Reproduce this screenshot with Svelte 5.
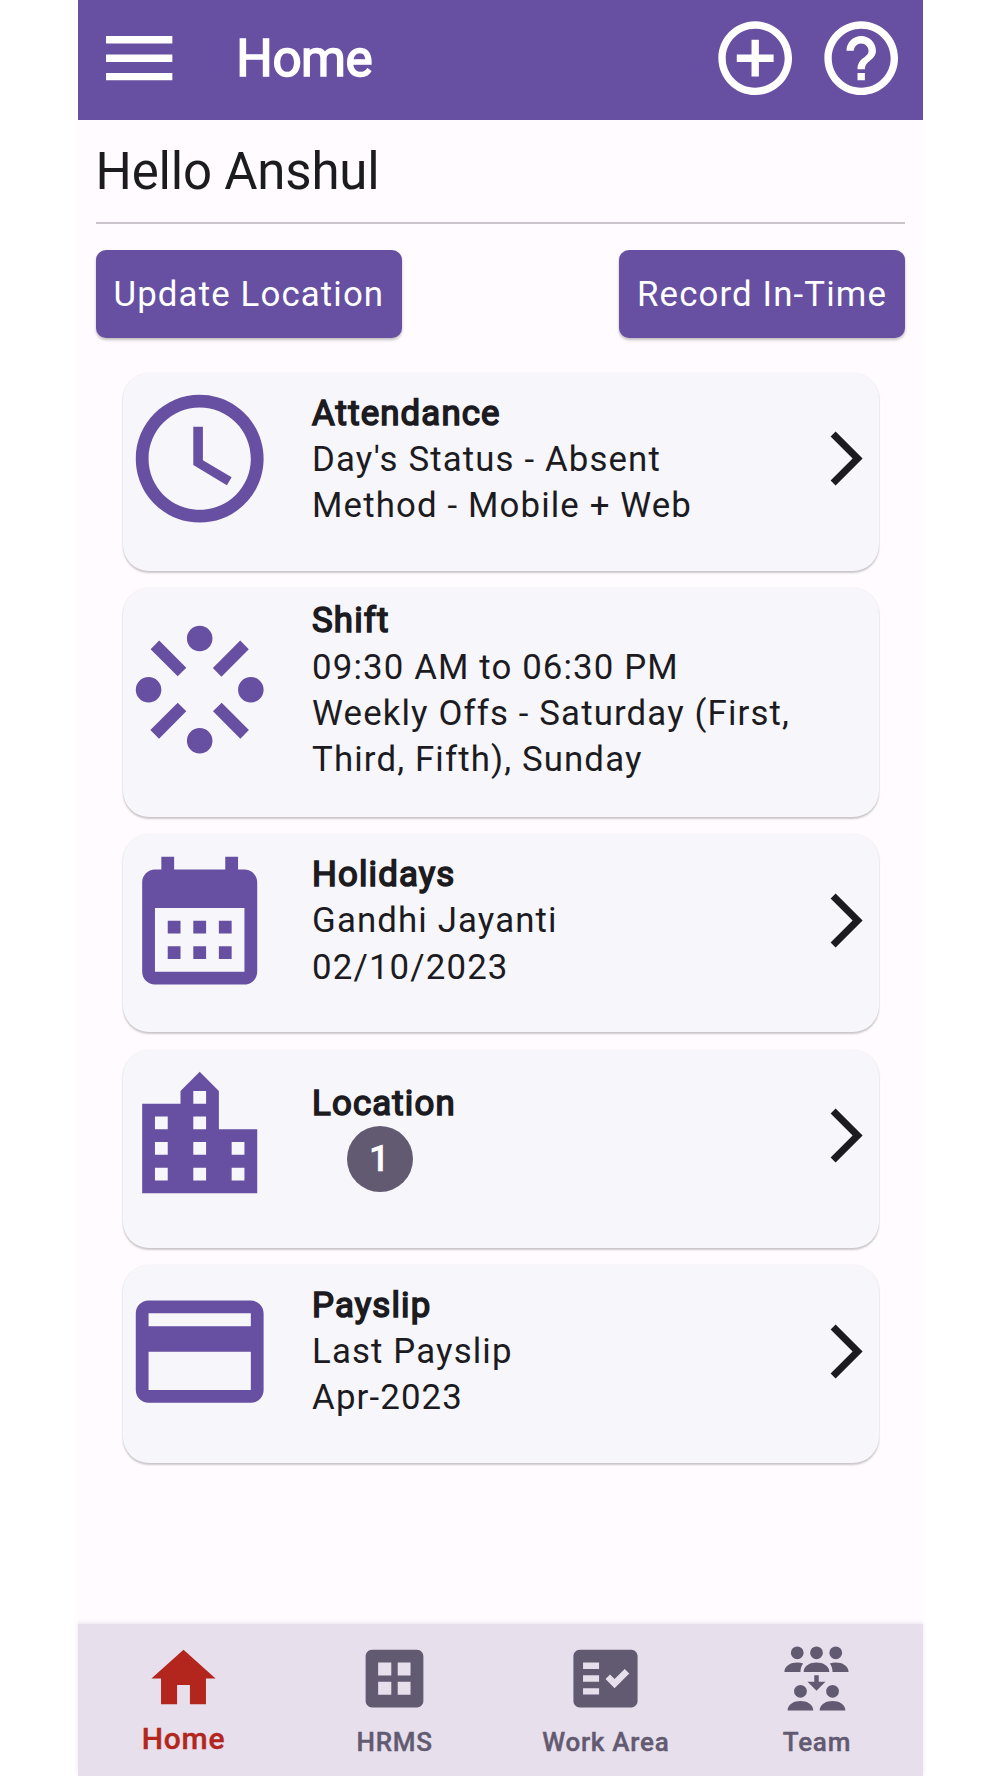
<script>
  /**
   * Employee home screen: greeting, quick actions, summary cards, bottom tabs
   */

  let userName = 'Anshul';
  let activeTab = $state('Home');

  const cards = [
    {
      title: 'Attendance',
      icon: 'clock',
      lines: ["Day's Status - Absent", 'Method - Mobile + Web'],
      link: true,
    },
    {
      title: 'Shift',
      icon: 'shift',
      lines: ['09:30 AM to 06:30 PM', 'Weekly Offs - Saturday (First, Third, Fifth), Sunday'],
      link: false,
    },
    {
      title: 'Holidays',
      icon: 'calendar',
      lines: ['Gandhi Jayanti', '02/10/2023'],
      link: true,
    },
    { title: 'Location', icon: 'city', lines: [], badge: 1, link: true },
    { title: 'Payslip', icon: 'card', lines: ['Last Payslip', 'Apr-2023'], link: true },
  ];

  const tabs = [
    { label: 'Home', icon: 'home' },
    { label: 'HRMS', icon: 'grid' },
    { label: 'Work Area', icon: 'checklist' },
    { label: 'Team', icon: 'team' },
  ];

  // 24x24 icon paths
  const icons = {
    menu: 'M3 18h18v-2H3v2zm0-5h18v-2H3v2zm0-7v2h18V6H3z',
    add: 'M13 7h-2v4H7v2h4v4h2v-4h4v-2h-4V7zm-1-5C6.48 2 2 6.48 2 12s4.48 10 10 10 10-4.48 10-10S17.52 2 12 2zm0 18c-4.41 0-8-3.59-8-8s3.59-8 8-8 8 3.59 8 8-3.59 8-8 8z',
    help: 'M11 18h2v-2h-2v2zm1-16C6.48 2 2 6.48 2 12s4.48 10 10 10 10-4.48 10-10S17.52 2 12 2zm0 18c-4.41 0-8-3.59-8-8s3.59-8 8-8 8 3.59 8 8-3.59 8-8 8zm0-14c-2.21 0-4 1.79-4 4h2c0-1.1.9-2 2-2s2 .9 2 2c0 2-3 1.75-3 5h2c0-2.25 3-2.5 3-5 0-2.21-1.79-4-4-4z',
    clock:
      'M12 2C6.48 2 2 6.48 2 12s4.48 10 10 10 10-4.48 10-10S17.52 2 12 2zm0 18c-4.42 0-8-3.58-8-8s3.58-8 8-8 8 3.58 8 8-3.58 8-8 8zM12.5 7H11v6l5.25 3.15.75-1.23-4.5-2.67V7z',
    shift:
      'M12 2a2 2 0 1 1 0 4 2 2 0 0 1 0-4zM12 18a2 2 0 1 1 0 4 2 2 0 0 1 0-4zM4 10a2 2 0 1 1 0 4 2 2 0 0 1 0-4zM20 10a2 2 0 1 1 0 4 2 2 0 0 1 0-4zM5.66 4.3L9.9 8.56 8.56 9.9 4.32 5.66zM18.34 4.3L14.06 8.6 15.4 9.98 19.68 5.66zM8.56 14.04L9.9 15.38 5.64 19.68 4.28 18.32zM15.44 14.04L14.08 15.38 18.36 19.68 19.7 18.32z',
    calendar:
      'M6 2h2v2h8V2h2v2h1c1.1 0 2 .9 2 2v14c0 1.1-.9 2-2 2H5c-1.1 0-2-.9-2-2V6c0-1.1.9-2 2-2h1V2zM5 10v10h14V10H5zM7 12h2v2H7v-2zM11 12h2v2h-2v-2zM15 12h2v2h-2v-2zM7 16h2v2H7v-2zM11 16h2v2h-2v-2zM15 16h2v2h-2v-2z',
    city: 'M15 11V5l-3-3-3 3v2H3v14h18V11h-6zm-8 8H5v-2h2v2zm0-4H5v-2h2v2zm0-4H5V9h2v2zm6 8h-2v-2h2v2zm0-4h-2v-2h2v2zm0-4h-2V9h2v2zm0-4h-2V5h2v2zm6 12h-2v-2h2v2zm0-4h-2v-2h2v2z',
    card: 'M20 4H4c-1.11 0-2 .89-2 2v12c0 1.11.89 2 2 2h16c1.11 0 2-.89 2-2V6c0-1.11-.89-2-2-2zM4 6h16v2H4V6zM4 12h16v6H4v-6z',
    chevron: 'M6.15 20.15L8 22l10-10L8 2 6.15 3.85 14.3 12z',
    home: 'M10 20v-6h4v6h5v-8h3L12 3 2 12h3v8z',
    grid: 'M19 3H5c-1.1 0-2 .9-2 2v14c0 1.1.9 2 2 2h14c1.1 0 2-.9 2-2V5c0-1.1-.9-2-2-2zM6.9 7H11v4.1H6.9V7zM13 7h4v4.1h-4V7zM6.9 13H11v4.1H6.9V13zM13 13h4v4.1h-4V13z',
    checklist:
      'M20 3H4c-1.1 0-2 .9-2 2v14c0 1.1.9 2 2 2h16c1.1 0 2-.9 2-2V5c0-1.1-.9-2-2-2zM10 17H5v-2h5v2zm0-4H5v-2h5v2zm0-4H5V7h5v2zm4.82 6L12 12.16l1.41-1.41 1.41 1.42L17.99 9l1.42 1.42L14.82 15z',
    team: 'M6 2a2 2 0 1 1 0 4 2 2 0 0 1 0-4zM12 2a2 2 0 1 1 0 4 2 2 0 0 1 0-4zM18 2a2 2 0 1 1 0 4 2 2 0 0 1 0-4zM8 10c0-2 2-3 4-3s4 1 4 3zM2 10c0-2 2-3 4-3 .65 0 1.3.1 1.85.32C7.3 8 7 8.9 7 10zM22 10c0-2-2-3-4-3-.65 0-1.3.1-1.85.32C16.7 8 17 8.9 17 10zM11.3 11h1.4v2h2.1L12 15.8 9.2 13h2.1zM7 14a2 2 0 1 1 0 4 2 2 0 0 1 0-4zM17 14a2 2 0 1 1 0 4 2 2 0 0 1 0-4zM3 22c0-2 2-3 4-3s4 1 4 3zM13 22c0-2 2-3 4-3s4 1 4 3z',
  };
</script>

{#snippet icon(name)}
  <svg viewBox="0 0 24 24" aria-hidden="true">
    <path
      d={icons[name]}
      fill="currentColor"
      fill-rule={name === 'calendar' || name === 'card' || name === 'grid' ? 'evenodd' : 'nonzero'}
    />
  </svg>
{/snippet}

<div class="screen">
  <header class="app-bar">
    <button class="icon-button" aria-label="Menu">{@render icon('menu')}</button>
    <h1>Home</h1>
    <button class="icon-button" aria-label="Add">{@render icon('add')}</button>
    <button class="icon-button" aria-label="Help">{@render icon('help')}</button>
  </header>

  <main>
    <p class="greeting">Hello {userName}</p>

    <div class="actions">
      <button class="action">Update Location</button>
      <button class="action">Record In-Time</button>
    </div>

    <div class="cards">
      {#each cards as card}
        <section class="card">
          <div class="card-icon">{@render icon(card.icon)}</div>
          <div class="card-text">
            <h2>{card.title}</h2>
            {#each card.lines as line}
              <p>{line}</p>
            {/each}
            {#if card.badge}
              <span class="badge">{card.badge}</span>
            {/if}
          </div>
          <div class="chevron">
            {#if card.link}
              {@render icon('chevron')}
            {/if}
          </div>
        </section>
      {/each}
    </div>
  </main>

  <nav class="tab-bar">
    {#each tabs as tab}
      <button
        class="tab"
        class:active={activeTab === tab.label}
        onclick={() => (activeTab = tab.label)}
      >
        {@render icon(tab.icon)}
        <span>{tab.label}</span>
      </button>
    {/each}
  </nav>
</div>

<style>
  :global(body) {
    background: #fff;
  }

  .screen {
    box-sizing: border-box;
    width: 844.5px;
    height: 1776px;
    margin-left: 78px;
    display: flex;
    flex-direction: column;
    background: #fffbff;
    color: #1c1b1f;
    font-family: Roboto, 'Liberation Sans', sans-serif;
  }

  h1,
  h2,
  p {
    margin: 0;
  }

  h1,
  h2 {
    font-weight: 400;
    -webkit-text-stroke: 1.6px currentColor;
  }

  button {
    margin: 0;
    padding: 0;
    border: 0;
    background: none;
    color: inherit;
    font: inherit;
  }

  svg {
    display: block;
    width: 100%;
    height: 100%;
  }

  .app-bar {
    box-sizing: border-box;
    height: 120px;
    padding: 14.4px 17.2px 0;
    display: flex;
    align-items: flex-start;
    gap: 17.4px;
    background: #674fa2;
    color: #fff;
  }

  .icon-button {
    flex: none;
    width: 88.4px;
    height: 88.4px;
  }

  .app-bar h1 {
    flex: 1;
    padding-left: 35.4px;
    font-size: 51.2px;
    line-height: 89px;
    letter-spacing: -0.5px;
  }

  main {
    flex: 1;
    padding: 0 17.5px;
  }

  .greeting {
    height: 102px;
    font-size: 51px;
    line-height: 104px;
    letter-spacing: -0.2px;
    border-bottom: 2px solid #cbc5cb;
  }

  .actions {
    display: flex;
    justify-content: space-between;
    margin-top: 26px;
  }

  .action {
    height: 87.5px;
    padding: 1px 18px 0;
    border-radius: 10px;
    background: #674fa2;
    color: #fff;
    font-size: 34.8px;
    letter-spacing: 1.13px;
    box-shadow: 0 2px 3px rgba(0, 0, 0, 0.25);
  }

  .cards {
    display: flex;
    flex-direction: column;
    gap: 17.4px;
    margin: 35.2px 26.5px 0 27px;
  }

  .card {
    display: flex;
    align-items: center;
    padding: 9.4px 0 35.2px;
    border-radius: 26px;
    background: #f7f6fb;
    box-shadow:
      0 2px 2px rgba(0, 0, 0, 0.2),
      0 0 2px rgba(0, 0, 0, 0.08);
  }

  .card-icon {
    flex: none;
    width: 153.4px;
    height: 153.4px;
    color: #674fa2;
  }

  .card-text {
    flex: 1;
    padding-left: 36.2px;
    font-size: 34.8px;
    line-height: 46.1px;
    letter-spacing: 1.13px;
  }

  .card-text h2 {
    font-size: 34.8px;
  }

  .badge {
    display: flex;
    align-items: center;
    justify-content: center;
    width: 66px;
    height: 66px;
    margin-left: 34.8px;
    border-radius: 50%;
    background: #625a71;
    color: #fff;
    font-size: 36px;
    font-weight: 500;
    -webkit-text-stroke: 0.5px currentColor;
  }

  .chevron {
    flex: none;
    width: 64.8px;
    height: 64.8px;
  }

  .tab-bar {
    flex: none;
    height: 151.6px;
    display: grid;
    grid-template-columns: repeat(4, 1fr);
    background: #e7dfec;
    color: #625a71;
    box-shadow: 0 -1px 4px rgba(98, 90, 113, 0.15);
  }

  .tab {
    display: flex;
    flex-direction: column;
    align-items: center;
    padding-top: 15.6px;
    font-size: 26px;
    font-weight: 500;
    letter-spacing: 0.75px;
    -webkit-text-stroke: 0.4px currentColor;
  }

  .tab svg {
    width: 77px;
    height: 77px;
  }

  .tab span {
    line-height: 50px;
  }

  .tab.active {
    color: #b3261e;
    font-size: 30px;
  }

  .tab.active span {
    line-height: 44px;
  }
</style>
